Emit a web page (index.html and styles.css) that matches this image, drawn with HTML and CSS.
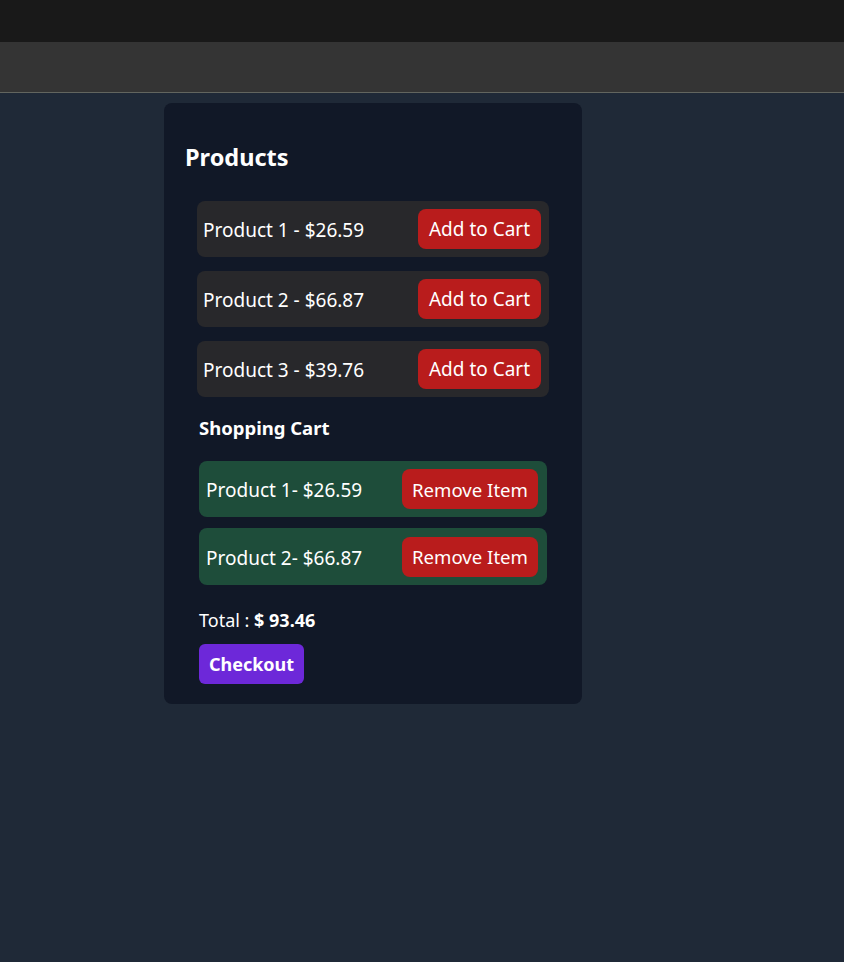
FILE: index.html
```html
<!DOCTYPE html>
<html lang="en">
<head>
<meta charset="utf-8">
<title>Shop</title>
<link rel="stylesheet" href="styles.css">
</head>
<body>
<div class="titlebar"></div>
<div class="toolbar"></div>
<main class="main">
  <section class="card">
    <h2 class="heading">Products</h2>
    <ul class="product-list">
      <li class="product-row"><span>Product 1 - $26.59</span><button class="btn-red">Add to Cart</button></li>
      <li class="product-row"><span>Product 2 - $66.87</span><button class="btn-red">Add to Cart</button></li>
      <li class="product-row"><span>Product 3 - $39.76</span><button class="btn-red">Add to Cart</button></li>
    </ul>
    <div class="cart">
      <h3 class="cart-title">Shopping Cart</h3>
      <ul class="cart-list">
        <li class="cart-row"><span>Product 1- $26.59</span><button class="btn-red btn-remove">Remove Item</button></li>
        <li class="cart-row tall"><span>Product 2- $66.87</span><button class="btn-red btn-remove">Remove Item</button></li>
      </ul>
      <p class="total">Total : <strong>$ 93.46</strong></p>
      <button class="btn-checkout">Checkout</button>
    </div>
  </section>
</main>
</body>
</html>
```

FILE: styles.css
```css
* { box-sizing: border-box; }
html, body { margin: 0; padding: 0; }
body {
  background: #1f2937;
  font-family: "Noto Sans", "Open Sans", sans-serif;
  color: #ffffff;
  min-height: 962px;
}
.titlebar { height: 42px; background: #191919; }
.toolbar { height: 51px; background: #343434; border-bottom: 1px solid #62655f; }
.main { padding-top: 10px; padding-left: 164px; }
.card {
  width: 418px;
  height: 601px;
  background: #111827;
  border-radius: 8px;
  padding: 38px 0 0 0;
}
.heading {
  margin: 0 0 28px 21px;
  font-size: 23.5px;
  line-height: 32px;
  font-weight: 700;
}
.product-list, .cart-list { list-style: none; margin: 0; padding: 0; }
.product-list {
  margin: 0 33px;
  display: flex;
  flex-direction: column;
  gap: 14px;
}
.product-row {
  height: 56px;
  background: #28282b;
  border-radius: 8px;
  padding: 0 8px 0 6px;
  display: flex;
  align-items: center;
  justify-content: space-between;
  font-size: 19px;
}
.product-row span, .cart-row span { position: relative; top: 1px; }
.btn-red {
  height: 40px;
  background: #b91c1c;
  color: #fff;
  border: none;
  border-radius: 8px;
  font-family: inherit;
  font-size: 19px;
  padding: 0 8px;
  width: 123px;
}
.btn-remove { width: 136px; font-size: 18.6px; }
.cart { margin: 0 35px; }
.cart-title {
  margin: 19px 0 21px 0;
  font-size: 18.5px;
  line-height: 24px;
  font-weight: 700;
}
.cart-list { display: flex; flex-direction: column; gap: 11px; }
.cart-row {
  height: 56px;
  background: #1e4d3a;
  border-radius: 8px;
  padding: 0 9px 0 7px;
  display: flex;
  align-items: center;
  justify-content: space-between;
  font-size: 19px;
}
.cart-row.tall { height: 57px; }
.total {
  margin: 22px 0 11px 0;
  font-size: 18px;
  line-height: 26px;
}
.total strong { font-weight: 700; }
.btn-checkout {
  height: 40px;
  width: 105px;
  background: #6d28d9;
  color: #fff;
  border: none;
  border-radius: 6px;
  font-family: inherit;
  font-size: 18px;
  font-weight: 700;
  padding: 0;
}
```
